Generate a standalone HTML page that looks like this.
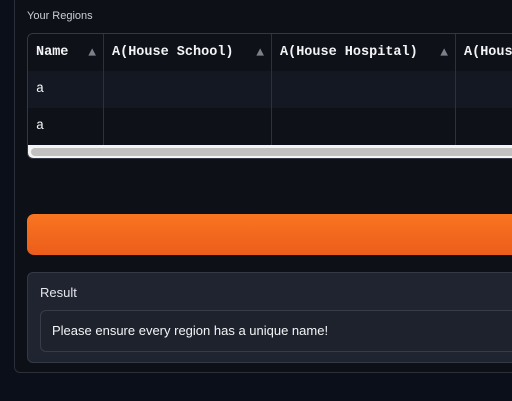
<!DOCTYPE html>
<html><head><style>
html,body{margin:0;padding:0;width:512px;height:401px;overflow:hidden;background:#0b0f19;font-family:"Liberation Sans",sans-serif;}
.panel{position:absolute;left:14px;top:-10px;width:520px;height:383px;border:1px solid #2a2f3a;border-radius:6px;background:#0d1017;box-sizing:border-box;}
.lbl{position:absolute;left:27px;top:10px;font-size:11px;color:#c9cdd4;}
.tbl{position:absolute;left:27px;top:33px;width:500px;height:126px;border:1px solid #333844;border-radius:6px;overflow:hidden;background:#0e1118;box-sizing:border-box;}
.row{position:absolute;left:0;width:500px;height:37px;}
.cell{position:absolute;top:0;height:37px;border-right:1px solid #2c313b;box-sizing:border-box;font-family:"Liberation Mono",monospace;font-size:13.5px;color:#f3f4f6;line-height:37px;padding-left:8px;font-weight:bold;white-space:nowrap;}
.arr{position:absolute;right:7px;top:0;color:#7b808a;font-size:13px;}
.sb{position:absolute;left:0;top:111px;width:500px;height:14px;background:#f4f4f4;}
.sb div{position:absolute;left:3px;top:3px;width:500px;height:8px;background:#c1c1c1;border-radius:4px;}
.btn{position:absolute;left:27px;top:214px;width:500px;height:41px;border-radius:7px;background:linear-gradient(#f97520,#ec5d1c);}
.res{position:absolute;left:27px;top:272px;width:500px;height:91px;border:1px solid #343a45;border-radius:6px;background:#1f2430;box-sizing:border-box;}
.res .t{position:absolute;left:12px;top:12px;font-size:13px;color:#e5e7eb;}
.box{position:absolute;left:12px;top:37px;width:480px;height:42px;border:1px solid #363c48;border-radius:6px;background:#1d222c;box-sizing:border-box;font-size:13px;color:#f3f4f6;line-height:40px;padding-left:11px;}
</style></head><body>
<div class="panel"></div>
<div class="lbl">Your Regions</div>
<div class="tbl">
 <div class="row" style="top:0;background:#0e1118">
  <div class="cell" style="left:0;width:76px">Name<span class="arr">▲</span></div>
  <div class="cell" style="left:76px;width:168px">A(House School)<span class="arr">▲</span></div>
  <div class="cell" style="left:244px;width:184px">A(House Hospital)<span class="arr">▲</span></div>
  <div class="cell" style="left:428px;width:200px">A(House</div>
 </div>
 <div class="row" style="top:37px;background:#141823">
  <div class="cell" style="left:0;width:76px;font-weight:normal">a</div>
  <div class="cell" style="left:76px;width:168px"></div>
  <div class="cell" style="left:244px;width:184px"></div>
 </div>
 <div class="row" style="top:74px;background:#0e1118">
  <div class="cell" style="left:0;width:76px;font-weight:normal">a</div>
  <div class="cell" style="left:76px;width:168px"></div>
  <div class="cell" style="left:244px;width:184px"></div>
 </div>
 <div class="sb"><div></div></div>
</div>
<div class="btn"></div>
<div class="res"><div class="t">Result</div><div class="box">Please ensure every region has a unique name!</div></div>
</body></html>
